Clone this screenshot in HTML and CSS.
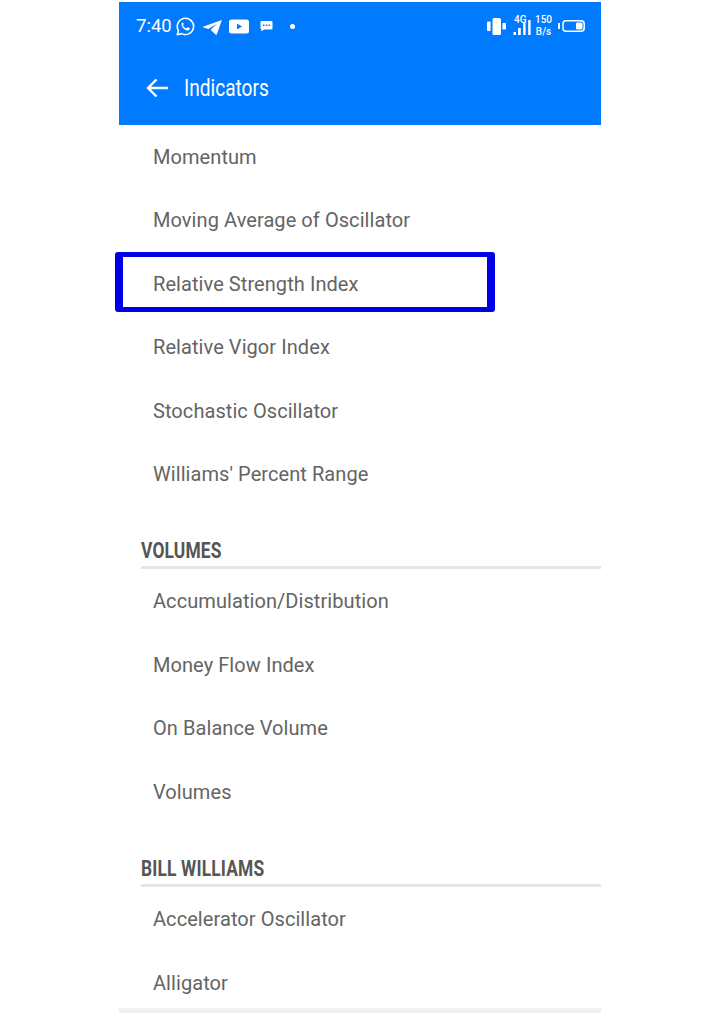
FILE: index.html
```html
<!DOCTYPE html>
<html lang="en">
<head>
<meta charset="utf-8">
<title>Indicators</title>
<link rel="stylesheet" href="styles.css">
</head>
<body>
<div class="phone">
  <header class="appbar">
    <div class="status">
      <span class="time">7:40</span>
      <svg class="ic-wa" viewBox="0 0 20 20"><path d="M10 1.300a8.600 8.600 0 0 0-7.400 13L1.400 18.700l4.500-1.200A8.600 8.600 0 1 0 10 1.300z" fill="none" stroke="#fff" stroke-width="1.700" stroke-linejoin="round"/><path d="M7.300 5.600c-.5 0-1.500.8-1.500 2.300 0 2.800 3.500 6.300 6.500 6.300 1.500 0 2.300-1.100 2.300-1.800 0-.4-.1-.6-.4-.7l-1.800-.9c-.3-.1-.5 0-.7.200l-.7.900c-.2.200-.4.200-.6.100-1.200-.5-2.300-1.500-3-2.700-.1-.2-.1-.4.100-.6l.6-.7c.1-.2.100-.4 0-.6l-.7-1.700c-.1-.3-.3-.3-.5-.3z" fill="#fff"/></svg>
      <svg class="ic-tg" viewBox="0 0 20 16"><path d="M20 0 .5 7c-.6.200-.6.900 0 1.100l5 1.600L15 4 8 10.300l5.500 5.300c.4.400 1 .2 1.200-.3z" fill="#fff"/></svg>
      <svg class="ic-yt" viewBox="0 0 20 14"><path d="M2.500 0h15A2.500 2.500 0 0 1 20 2.500v9a2.500 2.500 0 0 1-2.500 2.500h-15A2.500 2.500 0 0 1 0 11.500v-9A2.500 2.500 0 0 1 2.500 0zM8 4v6l5-3z" fill="#fff" fill-rule="evenodd"/></svg>
      <svg class="ic-msg" viewBox="0 0 12 11"><path d="M1 0h10a1 1 0 0 1 1 1v6.500a1 1 0 0 1-1 1H3.500L1 10.500V8.500a1 1 0 0 1-1-1V1a1 1 0 0 1 1-1zM2.500 3.500v1.500H4V3.500zM5.300 3.500v1.500h1.500V3.500zM8 3.500v1.500h1.500V3.500z" fill="#fff" fill-rule="evenodd"/></svg>
      <span class="dot"></span>
      <span class="spacer"></span>
      <svg class="ic-vib" viewBox="0 0 19 17"><rect x="5.500" y="0" width="8.500" height="17" rx="1.500" fill="#fff"/><rect x="0" y="3.500" width="3.600" height="9.500" rx=".8" fill="#fff"/><rect x="15.400" y="5" width="3.600" height="6.500" rx=".8" fill="#fff"/></svg>
      <div class="net">
        <span class="net-g">4G</span>
        <svg class="ic-sig" viewBox="0 0 18 15"><path d="M.5 12h2.500v3H.5zM5 8h2.800v7H5zM10.200 3h2.400v12h-2.400zM15.200 0h2.400v15h-2.400z" fill="#fff"/></svg>
      </div>
      <div class="speed"><span>150</span><span>B/s</span></div>
      <svg class="ic-bat" viewBox="0 0 27 12"><rect x="0" y="3" width="2" height="6" fill="#fff"/><rect x="5" y=".8" width="21.200" height="10.400" rx="3" fill="none" stroke="#fff" stroke-width="1.500"/><rect x="18" y="2.500" width="6.500" height="7" rx="1.200" fill="#fff"/></svg>
    </div>
    <div class="titlebar">
      <svg class="ic-back" viewBox="0 0 22 20"><path d="M22 10H2M10.500 1.500 2 10l8.500 8.500" fill="none" stroke="#fff" stroke-width="2.400"/></svg>
      <h1 class="title">Indicators</h1>
    </div>
  </header>
  <ul class="list list-first">
    <li class="row">Momentum</li>
    <li class="row">Moving Average of Oscillator</li>
    <li class="row">Relative Strength Index<span class="hl"></span></li>
    <li class="row">Relative Vigor Index</li>
    <li class="row">Stochastic Oscillator</li>
    <li class="row">Williams' Percent Range</li>
  </ul>
  <h2 class="section section-volumes"><span>VOLUMES</span></h2>
  <ul class="list">
    <li class="row">Accumulation/Distribution</li>
    <li class="row">Money Flow Index</li>
    <li class="row">On Balance Volume</li>
    <li class="row">Volumes</li>
  </ul>
  <h2 class="section section-bill"><span>BILL WILLIAMS</span></h2>
  <ul class="list list-last">
    <li class="row">Accelerator Oscillator</li>
    <li class="row">Alligator</li>
  </ul>
  <div class="foot"></div>
</div>
</body>
</html>
```
FILE: styles.css
```css
html, body {
  margin: 0;
  padding: 0;
  background: #fff;
}
body {
  height: 1013px;
  overflow: hidden;
  font-family: Roboto, "Liberation Sans", sans-serif;
}
.phone {
  width: 482px;
  margin-left: 119px;
  padding-top: 2px;
}
.appbar {
  height: 123px;
  background: #007aff;
  color: #fff;
  display: flex;
  flex-direction: column;
}
.status {
  display: flex;
  align-items: center;
  height: 48px;
  padding: 0 16px 0 17px;
}
.time {
  font-size: 18.500px;
  font-weight: 400;
  width: 40px;
}
.ic-wa { width: 19px; height: 19px; margin-right: 8px; }
.ic-tg { width: 19px; height: 15px; margin-right: 7px; margin-top: 2px; }
.ic-yt { width: 20px; height: 15px; margin-right: 11px; }
.ic-msg { width: 13px; height: 11px; margin-right: 17px; }
.dot {
  width: 5px;
  height: 5px;
  border-radius: 50%;
  background: #fff;
}
.spacer { flex: 1; }
.ic-vib { width: 19px; height: 17px; margin-right: 7px; }
.net { width: 18px; height: 18px; position: relative; margin-right: 4px; }
.net-g {
  position: absolute;
  left: 1px;
  top: -2px;
  font-size: 10px;
  font-weight: 500;
  line-height: 10px;
}
.ic-sig { position: absolute; left: 0; top: 3px; width: 18px; height: 15px; }
.speed {
  display: flex;
  flex-direction: column;
  align-items: center;
  width: 17px;
  font-size: 10px;
  font-weight: 500;
  line-height: 11.800px;
  margin-right: 6px;
}
.ic-bat { width: 27px; height: 12px; }
.titlebar {
  display: flex;
  align-items: center;
  height: 75px;
  padding-left: 27px;
}
.ic-back { width: 22px; height: 20px; margin-right: 16px; }
.title {
  margin: 2px 0 0;
  font-size: 23px;
  font-weight: 400;
  display: inline-block;
  transform: scaleX(.83);
  transform-origin: left center;
}
.list {
  list-style: none;
  margin: 0;
  padding: 1px 0 0;
}
.list-first {
  padding-top: .750px;
}
.list-last {
  margin-bottom: -7px;
}
.row {
  height: 63.500px;
  line-height: 63.500px;
  padding-left: 34px;
  font-size: 20px;
  font-weight: 400;
  letter-spacing: .07px;
  color: #646464;
  position: relative;
}
.hl {
  position: absolute;
  left: -4px;
  top: -1px;
  width: 364px;
  height: 50px;
  border: solid #0000e6;
  border-width: 5px 8px;
  border-radius: 3px;
}
.section {
  margin: 27px 0 0 22px;
  height: 32px;
  border-bottom: 3px solid #e6e6e6;
  font-size: 22px;
  line-height: 34px;
  font-weight: 700;
  color: #555;
}
.section-volumes {
  margin-top: 27.250px;
}
.section-bill {
  margin-top: 28px;
}
.section span {
  display: inline-block;
  letter-spacing: .2px;
  transform: scaleX(.79);
  transform-origin: left center;
}
.foot {
  height: 6px;
  background: #f0f0f0;
}
```
